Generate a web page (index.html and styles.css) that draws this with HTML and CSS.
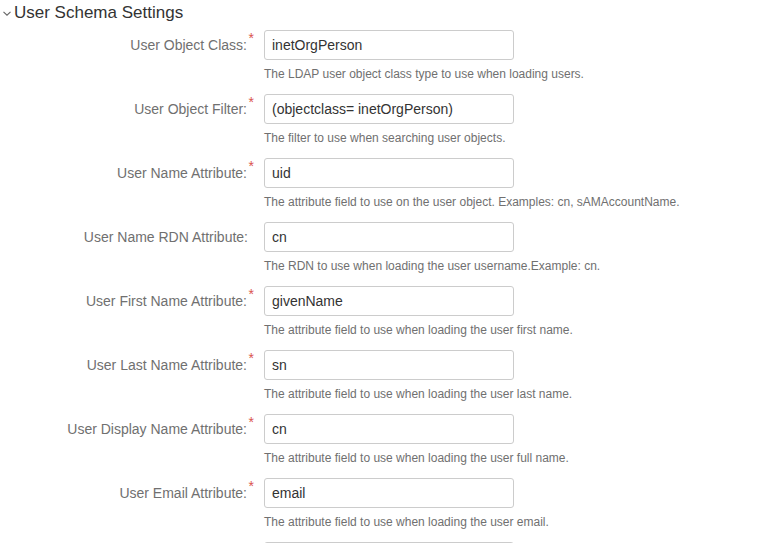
FILE: index.html
```html
<!DOCTYPE html>
<html>
<head>
<meta charset="utf-8">
<link rel="stylesheet" href="styles.css">
</head>
<body>
<div class="section">
  <div class="section-header">
    <svg class="chevron" width="8" height="5" viewBox="0 0 8 5"><path d="M0.5 0.8 L4 4.2 L7.5 0.8" fill="none" stroke="#666" stroke-width="1.1"/></svg>
    <span class="title">User Schema Settings</span>
  </div>
  <div class="form">
    <div class="row">
      <label class="label req">User Object Class:</label>
      <div class="field"><input class="input" value="inetOrgPerson"><div class="help">The LDAP user object class type to use when loading users.</div></div>
    </div>
    <div class="row">
      <label class="label req">User Object Filter:</label>
      <div class="field"><input class="input" value="(objectclass= inetOrgPerson)"><div class="help">The filter to use when searching user objects.</div></div>
    </div>
    <div class="row">
      <label class="label req">User Name Attribute:</label>
      <div class="field"><input class="input" value="uid"><div class="help">The attribute field to use on the user object. Examples: cn, sAMAccountName.</div></div>
    </div>
    <div class="row">
      <label class="label">User Name RDN Attribute:</label>
      <div class="field"><input class="input" value="cn"><div class="help">The RDN to use when loading the user username.Example: cn.</div></div>
    </div>
    <div class="row">
      <label class="label req">User First Name Attribute:</label>
      <div class="field"><input class="input" value="givenName"><div class="help">The attribute field to use when loading the user first name.</div></div>
    </div>
    <div class="row">
      <label class="label req">User Last Name Attribute:</label>
      <div class="field"><input class="input" value="sn"><div class="help">The attribute field to use when loading the user last name.</div></div>
    </div>
    <div class="row">
      <label class="label req">User Display Name Attribute:</label>
      <div class="field"><input class="input" value="cn"><div class="help">The attribute field to use when loading the user full name.</div></div>
    </div>
    <div class="row">
      <label class="label req">User Email Attribute:</label>
      <div class="field"><input class="input" value="email"><div class="help">The attribute field to use when loading the user email.</div></div>
    </div>
    <div class="row">
      <label class="label"></label>
      <div class="field"><input class="input" value=""></div>
    </div>
  </div>
</div>
</body>
</html>
```
FILE: styles.css
```css
html, body {
  margin: 0;
  padding: 0;
  background: #fff;
  font-family: "Liberation Sans", Arial, sans-serif;
  overflow: hidden;
}
.section-header {
  display: flex;
  align-items: center;
  height: 25px;
  padding-left: 3px;
}
.chevron {
  margin-right: 3px;
  margin-top: 2px;
}
.title {
  font-size: 17px;
  color: #333;
  line-height: 25px;
}
.form {
  padding-top: 5px;
}
.row {
  display: grid;
  grid-template-columns: 248px 250px;
  column-gap: 16px;
}
.label {
  position: relative;
  text-align: right;
  font-size: 14px;
  color: #707070;
  line-height: 30px;
  height: 30px;
}
.label.req::after {
  content: "*";
  position: absolute;
  right: -6px;
  top: -7px;
  color: #d9534f;
  font-size: 14px;
}
.label.req {
  padding-right: 1px;
}
.field {
  display: flex;
  flex-direction: column;
}
.input {
  box-sizing: border-box;
  width: 250px;
  height: 30px;
  border: 1px solid #ccc;
  border-radius: 3px;
  padding: 0 7px;
  font-family: "Liberation Sans", Arial, sans-serif;
  font-size: 14px;
  color: #333;
  margin: 0 0 6px 0;
  outline: none;
}
.help {
  font-size: 12px;
  line-height: 16px;
  color: #707070;
  margin-bottom: 12px;
  white-space: nowrap;
}
```
